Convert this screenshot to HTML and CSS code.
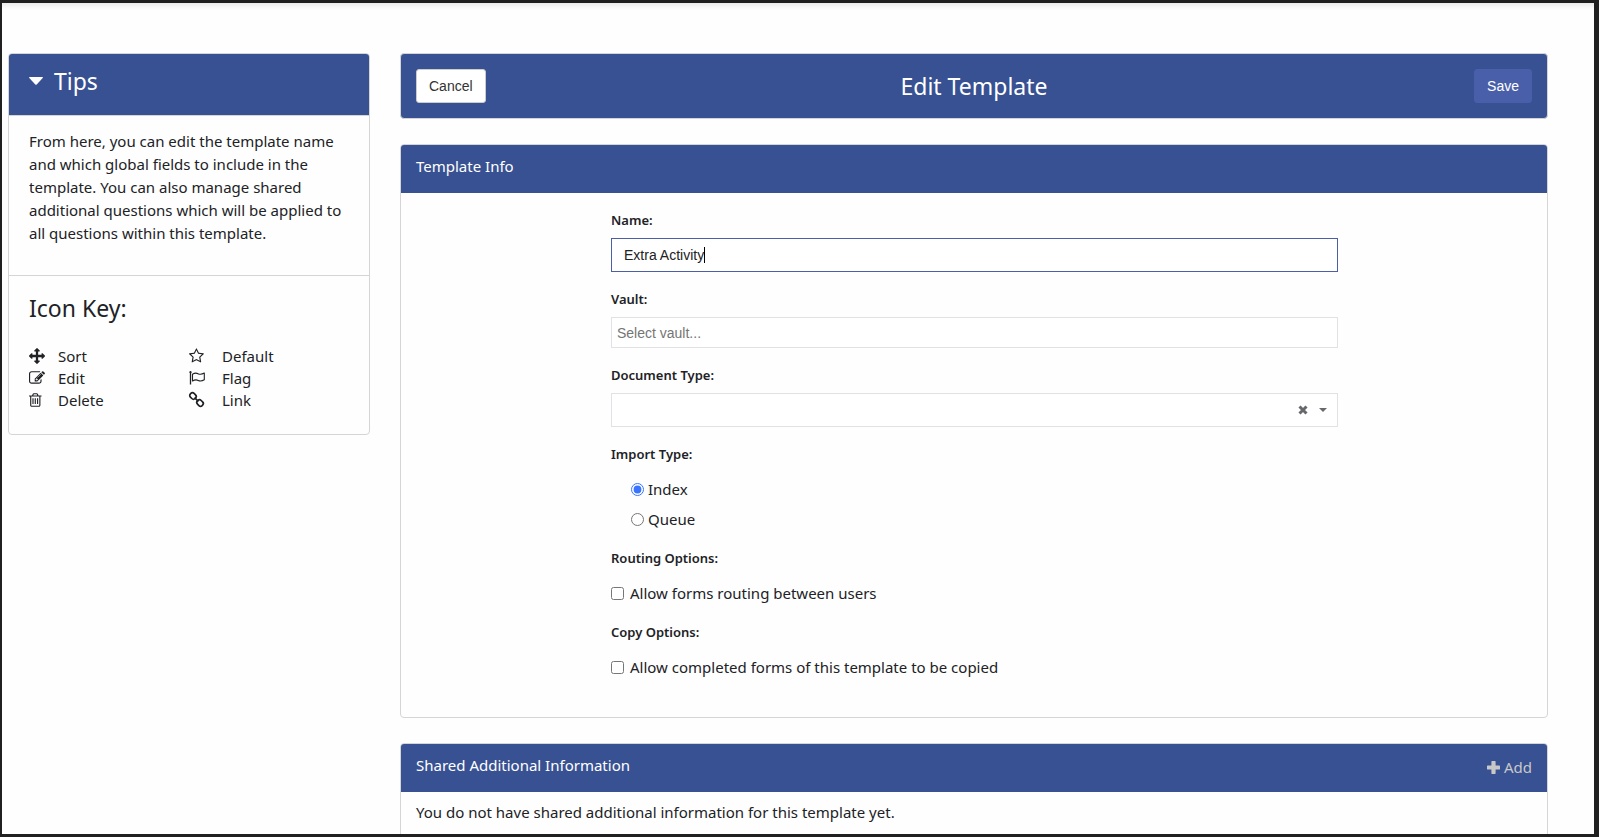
FILE: index.html
```html
<!DOCTYPE html>
<html lang="en">
<head>
<meta charset="utf-8">
<title>Edit Template</title>
<link rel="stylesheet" href="styles.css">
</head>
<body>
<div class="layout">
  <aside class="panel tips">
    <h2 class="tips-header">
      <button class="tips-toggle" type="button" aria-expanded="true">
        <svg class="tips-caret" viewBox="0 0 14 8" aria-hidden="true"><path d="M0.6 0h12.8q.9.2.3 1L7.7 7.4q-.7.6-1.4 0L.3 1Q-.3.2.6 0z"/></svg>
        Tips
      </button>
    </h2>
    <p class="tips-text">From here, you can edit the template name and which global fields to include in the template. You can also manage shared additional questions which will be applied to all questions within this template.</p>
    <section class="icon-key">
      <h3 class="key-title">Icon Key:</h3>
      <div class="key-columns">
        <ul class="key-list">
          <li class="key-item"><svg class="icon" viewBox="0 0 1792 1792" aria-hidden="true"><path d="M1792 896q0 26-19 45l-256 256q-19 19-45 19t-45-19-19-45v-128h-384v384h128q26 0 45 19t19 45-19 45l-256 256q-19 19-45 19t-45-19l-256-256q-19-19-19-45t19-45 45-19h128v-384h-384v128q0 26-19 45t-45 19-45-19l-256-256q-19-19-19-45t19-45l256-256q19-19 45-19t45 19 19 45v128h384v-384h-128q-26 0-45-19t-19-45 19-45l256-256q19-19 45-19t45 19l256 256q19 19 19 45t-19 45-45 19h-128v384h384v-128q0-26 19-45t45-19 45 19l256 256q19 19 19 45z"/></svg>Sort</li>
          <li class="key-item"><svg class="icon" viewBox="0 0 1792 1792" aria-hidden="true"><path d="M888 1184l116-116-152-152-116 116v56h96v96h56zm440-720q-16-16-33 1l-350 350q-17 17-1 33t33-1l350-350q17-17 1-33zm80 594v190q0 119-84.5 203.5t-203.500 84.500h-832q-119 0-203.500-84.500t-84.500-203.500v-832q0-119 84.500-203.500t203.500-84.500h832q63 0 117 25 15 7 18 23 3 17-9 29l-49 49q-14 14-32 8-23-6-45-6h-832q-66 0-113 47t-47 113v832q0 66 47 113t113 47h832q66 0 113-47t47-113v-126q0-13 9-22l64-64q15-15 35-7t20 29zm-96-738l288 288-672 672h-288v-288zm444 132l-92 92-288-288 92-92q28-28 68-28t68 28l152 152q28 28 28 68t-28 68z"/></svg>Edit</li>
          <li class="key-item"><svg class="icon" viewBox="192 0 1792 1792" aria-hidden="true"><path d="M704 736v576q0 14-9 23t-23 9h-64q-14 0-23-9t-9-23v-576q0-14 9-23t23-9h64q14 0 23 9t9 23zm256 0v576q0 14-9 23t-23 9h-64q-14 0-23-9t-9-23v-576q0-14 9-23t23-9h64q14 0 23 9t9 23zm256 0v576q0 14-9 23t-23 9h-64q-14 0-23-9t-9-23v-576q0-14 9-23t23-9h64q14 0 23 9t9 23zm128 724v-948h-896v948q0 22 7 40.500t14.500 27 10.500 8.500h832q3 0 10.500-8.500t14.500-27 7-40.500zm-672-1076h448l-48-117q-7-9-17-11h-317q-10 2-17 11zm928 32v64q0 14-9 23t-23 9h-96v948q0 83-47 143.500t-113 60.500h-832q-66 0-113-58.500t-47-141.500v-952h-96q-14 0-23-9t-9-23v-64q0-14 9-23t23-9h309l70-167q15-37 54-63t79-26h320q40 0 79 26t54 63l70 167h309q14 0 23 9t9 23z"/></svg>Delete</li>
        </ul>
        <ul class="key-list key-list-wide">
          <li class="key-item"><svg class="icon" viewBox="64 0 1792 1792" aria-hidden="true"><path d="M1201 1004l306-297-422-62-189-382-189 382-422 62 306 297-73 421 378-199 377 199zm527-357q0 22-26 48l-363 354 86 500q1 7 1 20 0 50-41 50-19 0-40-12l-449-236-449 236q-22 12-40 12-21 0-31.500-14.500t-10.500-35.500q0-6 2-20l86-500-364-354q-25-27-25-48 0-37 56-46l502-73 225-455q19-41 49-41t49 41l225 455 502 73q56 9 56 46z"/></svg>Default</li>
          <li class="key-item"><svg class="icon" viewBox="0 0 16 16" aria-hidden="true"><path d="M1.500 2v12.500" fill="none" stroke="currentColor" stroke-width="1.300"/><circle cx="1.500" cy="2.200" r="1.100"/><path d="M3.500 4.200C6 2.700 7.500 2.900 9 3.700s3.500 1 6.300-.6v6.700c-2.800 1.600-4.500 1.400-6.100.6s-3.200-.9-5.700.6z" fill="none" stroke="currentColor" stroke-width="1.100" stroke-linejoin="round"/></svg>Flag</li>
          <li class="key-item"><svg class="icon" viewBox="0 0 16 16" aria-hidden="true"><g fill="none" stroke="currentColor" stroke-width="1.700" transform="rotate(45 7.500 7.500)"><rect x="-.8" y="4.900" width="6.600" height="5.200" rx="2.300"/><rect x="9.200" y="4.900" width="6.600" height="5.200" rx="2.300"/><path d="M5.500 7.500h4" stroke-linecap="round"/></g></svg>Link</li>
        </ul>
      </div>
    </section>
  </aside>

  <main class="main">
    <header class="panel toolbar">
      <button class="btn btn-cancel" type="button">Cancel</button>
      <h1 class="title">Edit Template</h1>
      <button class="btn btn-save" type="submit" form="template-form">Save</button>
    </header>

    <section class="panel">
      <h2 class="panel-header">Template Info</h2>
      <form class="form" id="template-form">
        <div class="field">
          <label class="label" for="name">Name:</label>
          <div class="control">
            <input class="input input-active" id="name" type="text" value="Extra Activity" autocomplete="off">
            <span class="text-cursor"></span>
          </div>
        </div>
        <div class="field">
          <label class="label" for="vault">Vault:</label>
          <input class="input input-vault" id="vault" type="text" placeholder="Select vault...">
        </div>
        <div class="field">
          <label class="label" for="doctype">Document Type:</label>
          <div class="control">
            <select class="input select" id="doctype"><option></option></select>
            <span class="select-tools">
              <button class="clear" type="button" aria-label="Clear document type"><svg class="clear-icon" viewBox="0 0 10 10" aria-hidden="true"><path d="M1.500 1.500l7 7M8.500 1.500l-7 7" stroke="currentColor" stroke-width="3"/></svg></button>
              <svg class="select-caret" viewBox="0 0 8 4" aria-hidden="true"><path d="M0 0h8L4 4z"/></svg>
            </span>
          </div>
        </div>
        <fieldset class="field">
          <legend class="label">Import Type:</legend>
          <div class="choices choices-indented">
            <label class="choice choice-radio"><input class="tick" type="radio" name="import" checked>Index</label>
            <label class="choice choice-radio"><input class="tick" type="radio" name="import">Queue</label>
          </div>
        </fieldset>
        <fieldset class="field">
          <legend class="label">Routing Options:</legend>
          <div class="choices">
            <label class="choice"><input class="tick" type="checkbox">Allow forms routing between users</label>
          </div>
        </fieldset>
        <fieldset class="field">
          <legend class="label">Copy Options:</legend>
          <div class="choices">
            <label class="choice"><input class="tick" type="checkbox">Allow completed forms of this template to be copied</label>
          </div>
        </fieldset>
      </form>
    </section>

    <section class="panel">
      <div class="panel-header panel-header-split">
        <h2 class="panel-title">Shared Additional Information</h2>
        <button class="add" type="button"><svg class="add-icon" viewBox="0 0 13 13" aria-hidden="true"><path d="M5 0h3q.6 0 .6.700v3.700h3.700q.7 0 .7.700v2.800q0 .7-.7.700H8.600v3.700q0 .7-.6.700H5q-.6 0-.6-.7V8.600H.7Q0 8.600 0 7.900V5.100q0-.7.700-.7h3.700V.7Q4.400 0 5 0z"/></svg>Add</button>
      </div>
      <p class="empty">You do not have shared additional information for this template yet.</p>
    </section>
  </main>
</div>
</body>
</html>
```
FILE: styles.css
```css
* {
  box-sizing: border-box;
}

html {
  background: #fefefe;
}

body {
  height: 100vh;
  margin: 0;
  overflow: hidden;
  border: solid #202021;
  border-width: 3px 5px 3px 2px;
  background: #fefefe linear-gradient(#ececec, #fefefe) top / 100% 6px no-repeat padding-box;
  color: #212226;
  font: 15px/23px "Noto Sans", sans-serif;
}

h1, h2, h3, p, ul, fieldset {
  margin: 0;
  padding: 0;
  border: 0;
  font-weight: 400;
}

button, input, select {
  font: 14px/20px "Liberation Sans", Arial, sans-serif;
}

svg {
  display: block;
  overflow: visible;
  fill: currentColor;
}

.layout {
  display: grid;
  grid-template-columns: 362px 1fr;
  align-items: start;
  gap: 30px;
  padding: 50px 46px 0 6px;
}

.panel {
  overflow: hidden;
  border: 1px solid #d5d5d6;
  border-radius: 4px;
  background: #fefefe;
}

.tips-header {
  padding: 11px 20px 18px;
  border-bottom: 1px solid #d5d5d6;
  background: #385192;
}

.tips-toggle {
  display: flex;
  align-items: center;
  gap: 11px;
  padding: 0;
  border: 0;
  background: none;
  color: #fff;
  font: 23px/32px "Noto Sans", sans-serif;
}

.tips-caret {
  width: 14px;
  height: 8px;
}

.tips-text {
  padding: 14px 15px 30px 20px;
  border-bottom: 1px solid #d5d5d6;
}

.icon-key {
  padding: 15px 20px 23px;
}

.key-title {
  margin-bottom: 20px;
  font-size: 23px;
  line-height: 34px;
}

.key-columns {
  display: grid;
  grid-template-columns: 1fr 1fr;
}

.key-list {
  list-style: none;
}

.key-item {
  display: flex;
  align-items: center;
  gap: 13px;
  line-height: 22px;
}

.key-list-wide .key-item {
  gap: 17px;
}

.icon {
  width: 16px;
  height: 16px;
}

.main {
  display: grid;
  gap: 25px;
}

.toolbar {
  display: grid;
  grid-template-columns: 1fr auto 1fr;
  align-items: center;
  padding: 15px;
  background: #385192;
}

.title {
  color: #fff;
  font-size: 23px;
  line-height: 34px;
}

.btn {
  padding: 6px 12px;
  border: 1px solid #ccc;
  border-radius: 3px;
}

.btn-cancel {
  justify-self: start;
  background: #fff;
  color: #333;
}

.btn-save {
  justify-self: end;
  border-color: #4a5faa;
  background: #4a5faa;
  color: #fff;
}

.panel-header {
  padding: 10px 15px 15px;
  background: #385192;
  color: #fff;
  font-size: 15px;
  line-height: 23px;
}

.panel-header-split {
  display: flex;
  justify-content: space-between;
}

.panel-title {
  font-size: 15px;
}

.add {
  display: flex;
  align-items: center;
  gap: 4px;
  padding: 3px 0 0;
  border: 0;
  background: none;
  color: #c8c8c8;
  font: 15px/20px "Noto Sans", sans-serif;
}

.add-icon {
  width: 13px;
  height: 13px;
}

.form {
  display: grid;
  gap: 17px;
  padding: 17px 209px 38px 210px;
}

.label {
  display: block;
  margin-bottom: 8px;
  padding: 0;
  font-size: 13px;
  line-height: 20px;
  font-weight: 600;
}

.control {
  position: relative;
}

.input {
  display: block;
  width: 100%;
  height: 34px;
  padding: 6px 12px;
  border: 1px solid #e2e2e4;
  border-radius: 0;
  outline: 0;
  background: #fff;
  color: #222;
}

.input-active {
  border-color: #4a5fa5;
}

.input-vault {
  height: 31px;
  padding: 4px 5px;
}

.input-vault::placeholder {
  color: #757575;
}

.text-cursor {
  position: absolute;
  top: 9px;
  left: 93px;
  width: 1px;
  height: 16px;
  background: #000;
}

.select {
  appearance: none;
}

.select-tools {
  position: absolute;
  top: 0;
  right: 11px;
  display: flex;
  align-items: center;
  gap: 11px;
  height: 34px;
  color: #66686b;
}

.clear {
  padding: 0;
  border: 0;
  background: none;
  color: inherit;
}

.clear-icon {
  width: 10px;
  height: 10px;
}

.select-caret {
  width: 8px;
  height: 4px;
}

.choices {
  display: grid;
  gap: 7px;
  padding-top: 6px;
}

.choices-indented {
  padding-left: 20px;
}

.choice {
  display: flex;
  align-items: center;
  gap: 6px;
}

.choice-radio {
  gap: 4px;
}

.tick {
  width: 13px;
  height: 13px;
  margin: 0;
  accent-color: #3874ff;
}

.empty {
  padding: 9px 15px 40px;
}
```
